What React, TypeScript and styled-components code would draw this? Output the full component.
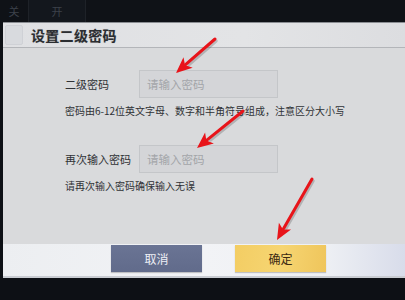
import React from "react";
import styled, { createGlobalStyle } from "styled-components";

const Global = createGlobalStyle`
  html, body { margin: 0; padding: 0; background: #0e1116; }
  body { font-family: "Noto Sans CJK SC", "Noto Sans", sans-serif; }
`;

const Screen = styled.div`
  position: relative;
  width: 405px;
  height: 300px;
  background: #0d1015;
  overflow: hidden;
  display: flex;
  flex-direction: column;
`;

const TopBar = styled.div`
  height: 22px;
  display: flex;
  align-items: stretch;
  background: #0f1217;
`;

const Tab = styled.div<{ $w: number; $active?: boolean }>`
  width: ${(p) => p.$w}px;
  display: flex;
  align-items: center;
  justify-content: center;
  color: #3c414a;
  font-size: 11px;
  background: ${(p) => (p.$active ? "#13171d" : "transparent")};
  border-right: 1px solid #1e2228;
  overflow: hidden;
`;

const Dialog = styled.div`
  margin-left: 3px;
  height: 255px;
  display: flex;
  flex-direction: column;
  background: #d9dadc;
  border-top: 1px solid #8a8d92;
`;

const TitleBar = styled.div`
  height: 24px;
  display: flex;
  align-items: center;
  gap: 8px;
  padding-left: 2px;
  background: linear-gradient(90deg, #dfe0e3 0%, #e3e4e6 60%, #dcdde0 100%);
  border-bottom: 1px solid #b3b5b9;
`;

const Corner = styled.div`
  width: 16px;
  height: 18px;
  border: 1px solid #cfd1d6;
  border-radius: 2px;
  background: #d8dade;
`;

const Title = styled.div`
  font-size: 14px;
  font-weight: 700;
  color: #2b2d31;
  letter-spacing: 0.3px;
  text-shadow: 0 0 1px rgba(0, 0, 0, 0.25);
`;

const Body = styled.div`
  flex: 1;
  padding: 22px 0 0 62px;
  display: flex;
  flex-direction: column;
  color: #303236;
`;

const Row = styled.div`
  display: flex;
  align-items: center;
  height: 28px;
`;

const Label = styled.div`
  width: 74px;
  font-size: 11px;
`;

const Input = styled.div`
  width: 130px;
  height: 26px;
  padding-left: 7px;
  display: flex;
  align-items: center;
  border: 1px solid #c4c6c9;
  background: #d4d5d8;
  color: #a3a5a9;
  font-size: 11.5px;
`;

const Hint = styled.div<{ $mt: number; $mb?: number }>`
  margin-top: ${(p) => p.$mt}px;
  margin-bottom: ${(p) => p.$mb ?? 0}px;
  font-size: 10px;
  line-height: 14px;
  white-space: nowrap;
`;

const Footer = styled.div`
  height: 31px;
  display: flex;
  align-items: flex-start;
  padding: 1px 0 0 108px;
  gap: 33px;
  background: linear-gradient(90deg, #eceef1 0%, #f2f3f6 50%, #eef0f4 80%, #d8dcea 100%);
  border-bottom: 2px solid #c9ccd2;
`;

const Button = styled.div<{ $kind: "cancel" | "ok" }>`
  width: 91px;
  height: 27px;
  display: flex;
  align-items: center;
  justify-content: center;
  font-size: 12px;
  color: ${(p) => (p.$kind === "ok" ? "#3b2a12" : "#eef0f6")};
  background: ${(p) =>
    p.$kind === "ok"
      ? "linear-gradient(100deg, #f3cd63 0%, #f6d572 50%, #efc55b 100%)"
      : "linear-gradient(180deg, #6a7494 0%, #616b8b 100%)"};
  box-shadow: 0 1px 1px rgba(0, 0, 0, 0.2);
`;

const Overlay = styled.svg`
  position: absolute;
  left: 0;
  top: 0;
  pointer-events: none;
`;

const arrows = [
  { x1: 215, y1: 39, x2: 176, y2: 73 },
  { x1: 243, y1: 111, x2: 197, y2: 148 },
  { x1: 312, y1: 179, x2: 277, y2: 240 },
];

function Arrow({ x1, y1, x2, y2 }: { x1: number; y1: number; x2: number; y2: number }) {
  const dx = x2 - x1;
  const dy = y2 - y1;
  const len = Math.hypot(dx, dy);
  const ux = dx / len;
  const uy = dy / len;
  const head = 16;
  const half = 7;
  const bx = x2 - ux * head;
  const by = y2 - uy * head;
  const px = -uy;
  const py = ux;
  const pts = `${x2},${y2} ${bx + px * half},${by + py * half} ${bx + ux * 4},${by + uy * 4} ${bx - px * half},${by - py * half}`;
  return (
    <g>
      <line x1={x1 + 1} y1={y1 + 2} x2={bx + 1} y2={by + 2} stroke="rgba(0,0,0,0.18)" strokeWidth={3.5} strokeLinecap="round" />
      <line x1={x1} y1={y1} x2={bx + ux * 3} y2={by + uy * 3} stroke="#e8141a" strokeWidth={3} strokeLinecap="round" />
      <polygon points={pts} fill="#e8141a" />
    </g>
  );
}

export default function App() {
  return (
    <>
      <Global />
      <Screen>
        <TopBar>
          <Tab $w={28}>关</Tab>
          <Tab $w={56} $active>开</Tab>
        </TopBar>
        <Dialog>
          <TitleBar>
            <Corner />
            <Title>设置二级密码</Title>
          </TitleBar>
          <Body>
            <Row>
              <Label>二级密码</Label>
              <Input>请输入密码</Input>
            </Row>
            <Hint $mt={6} $mb={27}>密码由6-12位英文字母、数字和半角符号组成，注意区分大小写</Hint>
            <Row>
              <Label>再次输入密码</Label>
              <Input>请输入密码</Input>
            </Row>
            <Hint $mt={6}>请再次输入密码确保输入无误</Hint>
          </Body>
          <Footer>
            <Button $kind="cancel">取消</Button>
            <Button $kind="ok">确定</Button>
          </Footer>
        </Dialog>
        <Overlay width={405} height={300} viewBox="0 0 405 300">
          {arrows.map((a, i) => (
            <Arrow key={i} {...a} />
          ))}
        </Overlay>
      </Screen>
    </>
  );
}
